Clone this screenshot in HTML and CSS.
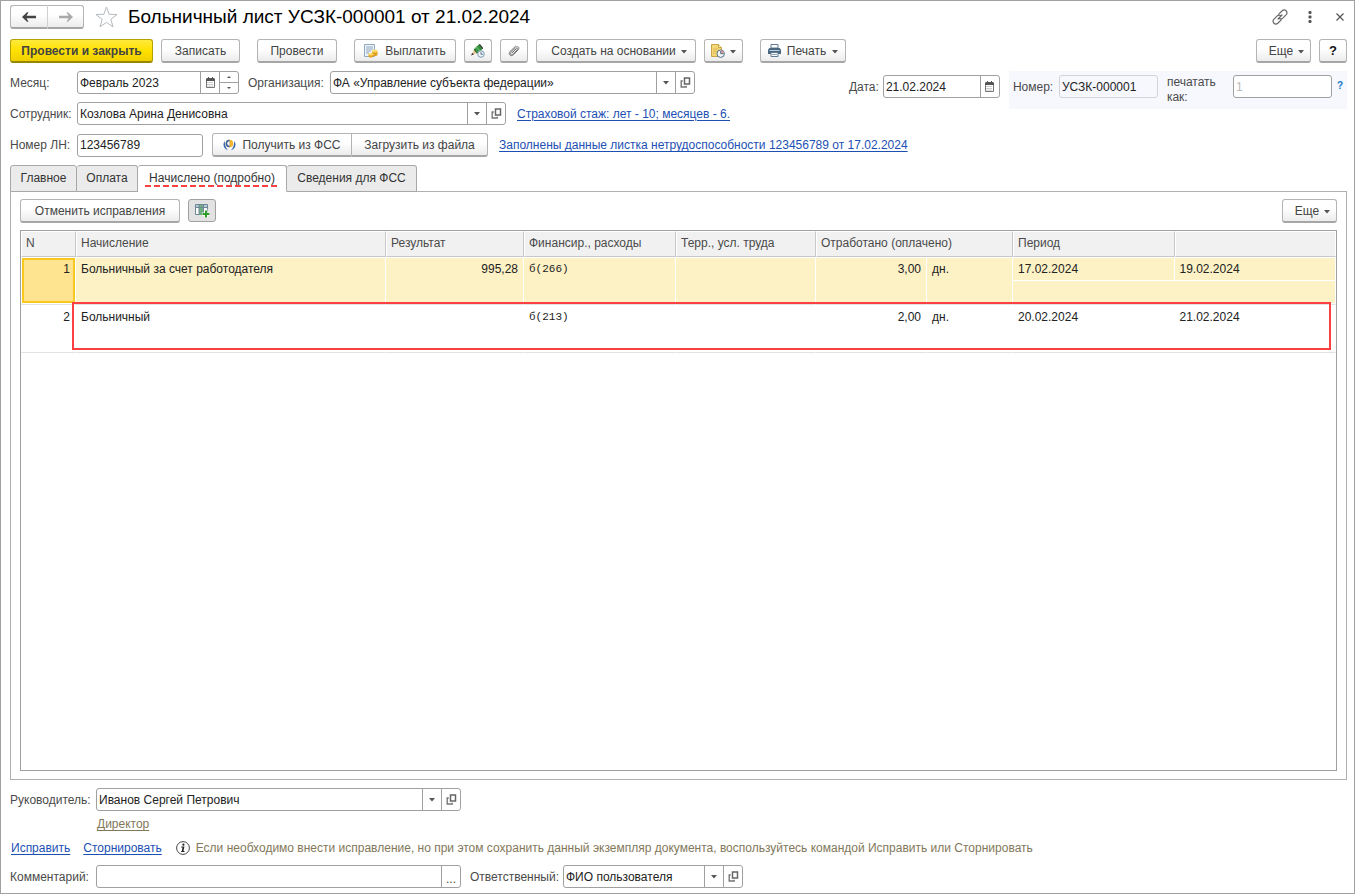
FILE: index.html
```html
<!DOCTYPE html>
<html lang="ru">
<head>
<meta charset="utf-8">
<title>Больничный лист УСЗК-000001 от 21.02.2024</title>
<link rel="stylesheet" href="styles.css">
</head>
<body>
<svg class="defs" width="0" height="0" aria-hidden="true">
  <symbol id="cal" viewBox="0 0 11 12"><path d="M2 1h1V0h1v1h3V0h1v1h1l1 1v2H1V2z" fill="#555"/><path d="M1 4h9v7H1z" fill="#fff"/><path d="M1.500 4v6.500h8V4" fill="none" stroke="#777"/><path d="M2.500 5.500h6M2.500 7.500h6M2.500 9.200h6" stroke="#999" stroke-dasharray="1 1"/></symbol>
  <symbol id="open" viewBox="0 0 11 11"><path d="M4.500 1h5v6h-5z" fill="none" stroke="#666" stroke-width="1.500"/><path d="M2.800 4H1.200v6h5V8.800" fill="none" stroke="#777" stroke-width="1.400"/></symbol>
  <symbol id="tri" viewBox="0 0 6 4"><path d="M0 0h6L3 3.500z" fill="#555"/></symbol>
</svg>
<div class="window">
  <header class="titlebar">
    <div class="nav">
      <button class="btn nav-btn" aria-label="Назад"><svg width="14" height="10" viewBox="0 0 14 10"><path d="M0 5l5-4.800h1.500L4.500 3.800H14v2.400H4.500l2 3.600H5z" fill="#444"/></svg></button><button class="btn nav-btn" aria-label="Вперед"><svg width="14" height="10" viewBox="0 0 14 10"><path d="M14 5L9 .2H7.500l2 3.600H0v2.400h9.500l-2 3.600H9z" fill="#aaa"/></svg></button>
    </div>
    <svg class="star" width="23" height="22" viewBox="0 0 23 22"><path d="M11.500 1l2.700 7.300 7.800.2-6.200 4.800 2.200 7.500-6.500-4.400L5 20.800l2.200-7.500L1 8.500l7.800-.2z" fill="#fff" stroke="#b4bac0"/></svg>
    <h1>Больничный лист УСЗК-000001 от 21.02.2024</h1>
    <div class="win-tools">
      <button class="plain" aria-label="Ссылка"><svg width="16" height="16" viewBox="0 0 16 16" fill="none" stroke="#666" stroke-width="1.200" stroke-linecap="round"><path d="M6.800 5.200l3.400-3.400c1.200-1.100 2.800-1 3.900 0s1.200 2.700.1 3.900l-3.400 3.400c-1 .9-2.200 1-3.200.5M9.200 10.800l-3.400 3.400c-1.200 1.100-2.800 1-3.900 0s-1.200-2.700-.1-3.900l3.400-3.400c1-.9 2.200-1 3.200-.5"/><path d="M6 10l4-4"/></svg></button>
      <button class="plain" aria-label="Меню"><svg width="4" height="12" viewBox="0 0 4 12" fill="#555"><rect x=".5" width="3" height="3" rx="1"/><rect x=".5" y="4.500" width="3" height="3" rx="1"/><rect x=".5" y="9" width="3" height="3" rx="1"/></svg></button>
      <button class="plain close" aria-label="Закрыть"><svg width="8" height="8" viewBox="0 0 8 8"><path d="M.5.5l7 7m0-7l-7 7" stroke="#555" stroke-width="1.200"/></svg></button>
    </div>
  </header>

  <div class="toolbar">
    <button class="btn primary">Провести и закрыть</button>
    <button class="btn w-save">Записать</button>
    <button class="btn w-post">Провести</button>
    <button class="btn w-pay"><svg width="14" height="14" viewBox="0 0 14 14"><path d="M.5.5h10v12H.5z" fill="#edf4fa" stroke="#8fa9c0"/><path d="M2 3h7M2 5h7M2 7h5M2 9h3" stroke="#8da6bb"/><path d="M4.500 10v2.500c1 1.300 4 1.300 5 0V10zM8 7v4c1 1.300 4.500 1.300 5.500 0V7z" fill="#e0a020"/><ellipse cx="10.800" cy="7" rx="2.800" ry="1.500" fill="#ffdc68"/><ellipse cx="7" cy="10.200" rx="2.500" ry="1.300" fill="#ffdc68"/></svg>Выплатить</button>
    <button class="btn icon" aria-label="Подпись"><svg width="14" height="14" viewBox="0 0 14 14"><path d="M4 4l4.500-4L12 4.500 7.500 8.500z" fill="#2f8f3c"/><path d="M5.300 2.800L9 7.200" stroke="#6cc06a" stroke-width="1.200"/><path d="M7.800.6L9 0l3.200 4-.8 1.200z" fill="#444"/><path d="M4 4l3.500 4.500-2 1L2.500 6z" fill="#2b7a35"/><path d="M2.800 6L5.500 9.300 1 11z" fill="#eac38b"/><path d="M0 11.500l1.300-2.800 1.500 1.800z" fill="#333"/><circle cx="10" cy="10" r="3.300" fill="#eef5fa" stroke="#7d98af"/><path d="M10 8v2.300h1.800" fill="none" stroke="#56738b"/></svg></button>
    <button class="btn icon" aria-label="Файлы"><svg width="12" height="12" viewBox="0 0 12 12" fill="none" stroke="#707070" stroke-linecap="round"><path d="M4 8l4.300-4.300c.9-.8 1.900.2 1 1.100L5 9.200C3.300 10.800 1.400 9 3 7.300l4.800-4.800c2-1.900 4.300.2 2.400 2.300L5.500 9.700c-2.700 2.500-5.800-.4-3.400-3.200L7.500 1.200"/></svg></button>
    <button class="btn w-create">Создать на основании<svg class="tri" width="6" height="4"><use href="#tri"/></svg></button>
    <button class="btn w-doc" aria-label="Отчеты"><svg width="14" height="14" viewBox="0 0 14 14"><path d="M.5.500h7l3 3v9H.5z" fill="#f5d776" stroke="#c9a348"/><path d="M7.500.500v3h3" fill="#fff2b8" stroke="#c9a348"/><path d="M2 5h6M2 7h4M2 9h3" stroke="#dab95a"/><circle cx="9.700" cy="9.700" r="3.700" fill="#f4f8fb" stroke="#54738e"/><path d="M9.700 9.700V6.500a3.200 3.200 0 0 1 3.200 3.200z" fill="#e09a94"/><path d="M9.700 7v2.700h3" fill="none" stroke="#54738e"/></svg><svg class="tri" width="6" height="4"><use href="#tri"/></svg></button>
    <button class="btn w-print"><svg width="13" height="13" viewBox="0 0 13 13"><path d="M3 .5h7V4H3z" fill="#fff" stroke="#5f7a92"/><path d="M1.500 4h10l1.500 1.500V10H0V5.500z" fill="#4a6780"/><path d="M1.500 6.500h10" stroke="#bed0df"/><path d="M3 8.500h7v4H3z" fill="#fff" stroke="#5f7a92"/><path d="M4 10.500h5" stroke="#8fa9c0"/></svg>Печать<svg class="tri" width="6" height="4"><use href="#tri"/></svg></button>
    <button class="btn w-more push">Еще<svg class="tri" width="6" height="4"><use href="#tri"/></svg></button>
    <button class="btn icon help">?</button>
  </div>

  <div class="form-top">
    <div class="form-left">
      <div class="row">
        <label class="lbl" for="month">Месяц:</label>
        <div class="field f-month"><input id="month" value="Февраль 2023"><button aria-label="Календарь"><svg width="11" height="12"><use href="#cal"/></svg></button><div class="spin"><button aria-label="Больше"><svg width="4" height="2"><path d="M0 2h4L2 0z" fill="#555"/></svg></button><button aria-label="Меньше"><svg width="4" height="2"><path d="M0 0h4L2 2z" fill="#555"/></svg></button></div></div>
        <label class="lbl-org" for="org">Организация:</label>
        <div class="field f-org"><input id="org" value="ФА «Управление субъекта федерации»"><button aria-label="Выбрать"><svg width="6" height="4"><use href="#tri"/></svg></button><button aria-label="Открыть"><svg width="11" height="11"><use href="#open"/></svg></button></div>
      </div>
      <div class="row">
        <label class="lbl" for="emp">Сотрудник:</label>
        <div class="field f-emp"><input id="emp" value="Козлова Арина Денисовна"><button aria-label="Выбрать"><svg width="6" height="4"><use href="#tri"/></svg></button><button aria-label="Открыть"><svg width="11" height="11"><use href="#open"/></svg></button></div>
        <a class="link gap-link" href="#">Страховой стаж: лет - 10; месяцев - 6.</a>
      </div>
    </div>
    <div class="form-right">
      <label for="date">Дата:</label>
      <div class="field f-date"><input id="date" value="21.02.2024"><button aria-label="Календарь"><svg width="11" height="12"><use href="#cal"/></svg></button></div>
      <div class="number-box">
        <label for="num">Номер:</label>
        <div class="field f-num"><input id="num" value="УСЗК-000001" readonly></div>
        <label class="print-as" for="pas">печатать как:</label>
        <div class="field f-pas"><input id="pas" placeholder="1"></div>
        <button class="plain hint">?</button>
      </div>
    </div>
  </div>
  <div class="row row-ln">
    <label class="lbl" for="ln">Номер ЛН:</label>
    <div class="field f-ln"><input id="ln" value="123456789"></div>
    <div class="group">
      <button class="btn w-fss"><svg width="13" height="12" viewBox="0 0 13 12"><path d="M1.800 2C-.8 5 .5 9.500 5 11.500 2.800 9 1.600 6 1.800 2zM11.200 2c2.600 3 1.300 7.500-3.200 9.500 2.200-2.500 3.400-5.500 3.200-9.500z" fill="#3466ac"/><circle cx="6.500" cy="4.500" r="3.800" fill="#f2b62e"/><path d="M6.500.700a3.800 3.800 0 0 0 0 7.600z" fill="#335c99"/><path d="M6.500 2.200a2.300 2.300 0 0 0 0 4.600z" fill="#fff"/></svg>Получить из ФСС</button><button class="btn w-file">Загрузить из файла</button>
    </div>
    <a class="link gap-link" href="#">Заполнены данные листка нетрудоспособности 123456789 от 17.02.2024</a>
  </div>

  <nav class="tabs">
    <button class="tab t-main">Главное</button><button class="tab t-pay">Оплата</button><button class="tab t-acc active"><span>Начислено (подробно)</span></button><button class="tab t-fss">Сведения для ФСС</button>
  </nav>
  <main class="panel">
    <div class="panel-bar">
      <button class="btn w-cancel">Отменить исправления</button>
      <button class="btn icon pressed" aria-label="Колонки"><svg width="15" height="14" viewBox="0 0 15 14"><path d="M.5.500h12v10H.5z" fill="#fff" stroke="#6d8797"/><path d="M1 1h11v2H1z" fill="#b7cbd8"/><path d="M4 1h4.500v10H4z" fill="#6fae80"/><path d="M4 .500v10M8.500.500v10M.5 3.500h12" stroke="#6d8797"/><path d="M9.500 5.500h3v3H15v3h-2.500V14h-3v-2.500H7v-3h2.500z" fill="#fff"/><path d="M10 6.500h2V9h2.500v2H12v2.500h-2V11H7.500V9H10z" fill="#2f9b28"/></svg></button>
      <button class="btn w-more push">Еще<svg class="tri" width="6" height="4"><use href="#tri"/></svg></button>
    </div>
    <div class="grid">
      <table>
        <colgroup><col class="c-n"><col class="c-name"><col class="c-res"><col class="c-fin"><col class="c-terr"><col class="c-qty"><col class="c-unit"><col><col></colgroup>
        <thead><tr><th>N</th><th>Начисление</th><th>Результат</th><th>Финансир., расходы</th><th>Терр., усл. труда</th><th colspan="2">Отработано (оплачено)</th><th>Период</th><th></th></tr></thead>
        <tbody class="sel">
          <tr><td rowspan="2" class="num cur">1</td><td rowspan="2">Больничный за счет работодателя</td><td rowspan="2" class="num">995,28</td><td rowspan="2" class="mono">б(266)</td><td rowspan="2"></td><td rowspan="2" class="num">3,00</td><td rowspan="2">дн.</td><td class="up">17.02.2024</td><td class="up">19.02.2024</td></tr>
          <tr><td colspan="2" class="low"></td></tr>
        </tbody>
        <tbody>
          <tr><td rowspan="2" class="num">2</td><td rowspan="2">Больничный</td><td rowspan="2" class="num"></td><td rowspan="2" class="mono">б(213)</td><td rowspan="2"></td><td rowspan="2" class="num">2,00</td><td rowspan="2">дн.</td><td class="up">20.02.2024</td><td class="up">21.02.2024</td></tr>
          <tr><td colspan="2" class="low"></td></tr>
        </tbody>
      </table>
      <div class="frame"></div>
    </div>
  </main>

  <footer class="foot">
    <div class="row">
      <label class="lbl2" for="head">Руководитель:</label>
      <div class="field f-head"><input id="head" value="Иванов Сергей Петрович"><button aria-label="Выбрать"><svg width="6" height="4"><use href="#tri"/></svg></button><button aria-label="Открыть"><svg width="11" height="11"><use href="#open"/></svg></button></div>
    </div>
    <div class="post"><a class="link olive" href="#">Директор</a></div>
    <div class="notes">
      <a class="link" href="#">Исправить</a>
      <a class="link" href="#">Сторнировать</a>
      <svg width="14" height="14" viewBox="0 0 14 14"><circle cx="7" cy="7" r="6.400" fill="#fff" stroke="#444"/><circle cx="7.400" cy="3.700" r="1.100" fill="#222"/><path d="M5.200 5.500h3.200l-.9 4.500h1v1H5.200v-1h.6l.7-3.500H5.200z" fill="#222"/></svg>
      <span class="olive">Если необходимо внести исправление, но при этом сохранить данный экземпляр документа, воспользуйтесь командой Исправить или Сторнировать</span>
    </div>
    <div class="row">
      <label class="lbl2" for="com">Комментарий:</label>
      <div class="field f-head"><input id="com"><button class="dots" aria-label="Изменить">...</button></div>
      <label class="lbl-resp" for="resp">Ответственный:</label>
      <div class="field f-resp"><input id="resp" value="ФИО пользователя"><button aria-label="Выбрать"><svg width="6" height="4"><use href="#tri"/></svg></button><button aria-label="Открыть"><svg width="11" height="11"><use href="#open"/></svg></button></div>
    </div>
  </footer>
</div>
</body>
</html>
```
FILE: styles.css
```css
* { box-sizing: border-box; }
body { margin: 0; background: #fff; color: #4a4a4a; }
body, button, input { font: 12px/14px "Liberation Sans", Arial, sans-serif; }
button, input { color: inherit; margin: 0; padding: 0; }
svg { flex: none; }
.defs { position: absolute; }
.window { display: flex; flex-direction: column; min-height: 100vh; padding: 4px 7px 5px 9px; border: 1px solid #a0a0a0; }

.titlebar { display: flex; align-items: center; height: 24px; }
.nav, .group { display: flex; }
.nav .btn:first-child, .group .btn:first-child { border-radius: 3px 0 0 3px; }
.nav .btn:last-child, .group .btn:last-child { border-radius: 0 3px 3px 0; border-left: 0; }
.nav-btn { width: 37px; }
.nav .btn:first-child { border-right-color: #d0d0d0; width: 38px; }
.nav .btn:last-child { width: 36px; }
.star { margin: 0 10px 0 11px; }
h1 { margin: 0; font-size: 19px; line-height: 24px; font-weight: normal; color: #000; }
.win-tools { display: flex; align-items: center; gap: 20px; margin: 0 3px 0 auto; }
.close { margin-left: 4px; }
.plain { display: flex; border: 0; background: none; }

.btn { display: flex; align-items: center; justify-content: center; height: 24px; border: 1px solid #b4b4b4; border-bottom: 2px solid #a6a6a6; border-radius: 3px; background: linear-gradient(#fff 40%, #ececec); color: #444; white-space: nowrap; }
.toolbar { display: flex; margin-top: 10px; }
.primary { width: 143px; margin-right: 8px; border-color: #b5a000 #b5a000 #978600; background: linear-gradient(#ffea3c, #ffe100 50%, #f0cf00); font-weight: bold; }
.w-save { width: 79px; margin-right: 17px; }
.w-post { width: 80px; margin-right: 17px; }
.w-pay { width: 102px; margin-right: 8px; gap: 7px; }
.icon { width: 28px; margin-right: 8px; }
.w-create { width: 160px; margin-right: 8px; padding-left: 6px; }
.w-doc { width: 39px; margin-right: 17px; }
.w-print { width: 86px; gap: 6px; }
.w-print .tri { margin-left: 0; }
.w-more { width: 55px; padding-left: 6px; }
.tri { margin: 2px 0 0 5px; }
.push { margin-left: auto; }
.toolbar .w-more { margin-right: 8px; }
.help { margin-right: 0; font-size: 13px; font-weight: bold; color: #111; }

.form-top { display: flex; justify-content: space-between; margin-top: 8px; }
.form-left { display: flex; flex-direction: column; gap: 8px; }
.row { display: flex; align-items: center; }
.row label { white-space: nowrap; }
.lbl { width: 67px; }
.field { display: flex; height: 23px; border: 1px solid #a0a0a0; border-radius: 3px; background: #fff; overflow: hidden; }
.field input { flex: 1; min-width: 0; border: 0; padding: 0 2px; background: none; color: #222; outline: none; }
.field input::placeholder { color: #bbb; opacity: 1; }
.field > button { display: flex; align-items: center; justify-content: center; width: 19px; border: 0; border-left: 1px solid #a0a0a0; background: none; }
.spin { display: flex; flex-direction: column; width: 19px; border-left: 1px solid #a0a0a0; }
.spin button { display: flex; flex: 1; align-items: center; justify-content: center; border: 0; background: none; }
.spin button + button { border-top: 1px solid #a0a0a0; }
.f-month { width: 162px; }
.lbl-org { width: 91px; padding-left: 9px; }
.f-org { width: 365px; }
.f-emp { width: 429px; }
.f-ln { width: 126px; }
.gap-link { margin-left: 11px; }
.link { color: #1c50b4; text-decoration: underline; text-underline-offset: 2px; white-space: nowrap; }

.form-right { display: flex; align-items: flex-start; }
.form-right > label { width: 34px; padding-top: 9px; }
.form-right > .field { margin-top: 4px; }
.f-date { width: 117px; margin-right: 9px; }
.number-box { display: flex; align-items: flex-start; height: 38px; padding: 4px 4px 0; background: #f7f8fe; }
.number-box > label:first-child { width: 46px; padding-top: 5px; }
.f-num { width: 99px; border-color: #d4d4d8; background: #f7f8fe; }
.print-as { width: 75px; padding: 0 14px 0 9px; line-height: 15px; }
.f-pas { width: 99px; }
.hint { margin: 4px 0 0 5px; font-size: 10px; font-weight: bold; color: #1478c8; }

.row-ln { margin-top: 8px; }
.group { margin-left: 9px; }
.w-fss { width: 140px; gap: 6px; }
.w-file { width: 136px; }

.tabs { display: flex; height: 27px; margin: 8px 0 -1px; position: relative; }
.tab { height: 27px; padding-bottom: 2px; border: 1px solid #a8a8a8; border-left-width: 0; border-radius: 3px 3px 0 0; background: #ebebeb; color: #333; white-space: nowrap; }
.tab:first-child { border-left-width: 1px; }
.tab.active { border-bottom-color: #fff; background: #fff; }
.t-main { width: 67px; }
.t-pay { width: 61px; }
.t-acc { width: 149px; }
.t-fss { width: 130px; }
.t-acc span { display: inline-block; padding: 2px 4px; background: repeating-linear-gradient(90deg, #fa4040 0 6px, transparent 6px 9px) left bottom / 100% 2px no-repeat; }

.panel { display: flex; flex: 1; flex-direction: column; border: 1px solid #b0b0b0; padding: 7px 9px 8px; }
.panel-bar { display: flex; gap: 8px; margin-bottom: 7px; }
.w-cancel { width: 160px; }
.pressed { height: 23px; border: 1px solid #a0a0a0; background: #e2e2e2; }
.grid { position: relative; flex: 1; border: 1px solid #a0a0a0; }
table { width: 100%; table-layout: fixed; border-spacing: 0; }
th, td { padding: 0 5px; text-align: left; vertical-align: top; font-weight: normal; white-space: nowrap; overflow: hidden; }
th { height: 26px; padding: 4px; border: 1px solid #fff; border-right-color: #c8c8c8; border-bottom-color: #c8c8c8; background: #f1f1f1; }
th:last-child { border-right-color: #fff; }
td { height: 24px; padding-top: 5px; color: #222; border-right: 1px solid transparent; border-bottom: 1px solid #e2e2e2; }
.num { text-align: right; }
.up { border-bottom-color: transparent; }
.sel td { background: #fdf1c6; border-right-color: #fff; box-shadow: inset 0 1px #fff, inset 0 -1px #fff; }
.sel .up { border-bottom-color: #fff; box-shadow: inset 0 1px #fff; }
.sel .low { box-shadow: inset 0 -1px #fff; }
.sel .cur { background: #fee491; box-shadow: inset 0 1px #fff, inset 0 -1px #fff, inset 1px 0 #fff, inset 3px 3px #f8c81c, inset -2px -3px #f8c81c; }
.mono { font: 11px/14px "Liberation Mono", "Courier New", monospace; }
.c-n { width: 55px; }
.c-name { width: 310px; }
.c-res { width: 138px; }
.c-fin { width: 152px; }
.c-terr { width: 140px; }
.c-qty { width: 111px; }
.c-unit { width: 86px; }
.frame { position: absolute; left: 51px; right: 5px; top: 71px; height: 48px; border: 2px solid #fa4040; pointer-events: none; }

.foot { margin-top: 8px; }
.lbl2 { width: 86px; }
.f-head { width: 365px; }
.post { margin: 6px 0 0 87px; line-height: 14px; }
.olive { color: #82785a; }
.notes { display: flex; align-items: center; gap: 13px; margin: 8px 0 8px 1px; line-height: 18px; }
.notes span { margin-left: -7px; }
.notes svg { margin-left: 1px; }
.field > .dots { align-items: flex-end; padding-bottom: 1px; }
.lbl-resp { width: 102px; padding-left: 9px; }
.f-resp { width: 180px; }
```
